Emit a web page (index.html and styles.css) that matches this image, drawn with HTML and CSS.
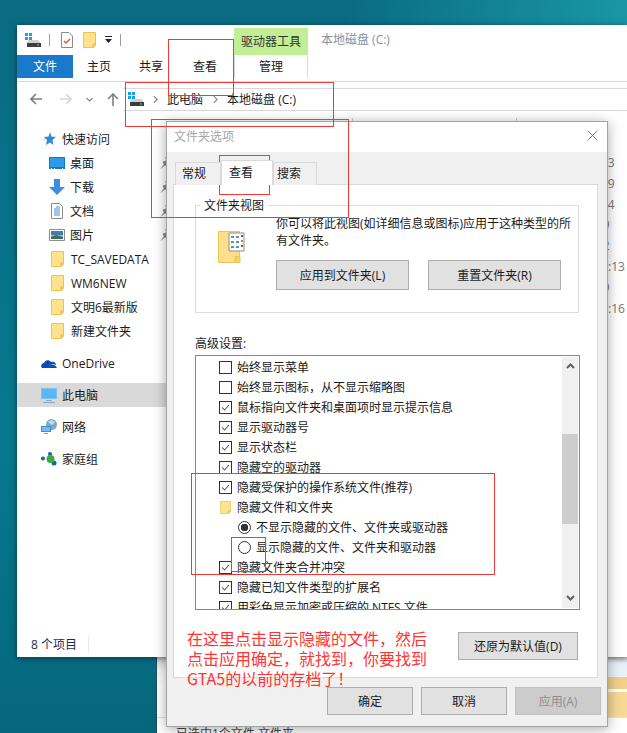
FILE: index.html
```html
<!DOCTYPE html>
<html lang="zh-CN">
<head>
  <meta charset="UTF-8" />
  <title>文件夹选项</title>
  <link rel="stylesheet" href="styles.css">
</head>
<body>
  <svg class="defs" width="0" height="0">
    <symbol id="folder" viewBox="0 0 13 16">
      <path d="M.5.5h12v11.5h-2.5v3.500H.5z" fill="#ffe28c" stroke="#eac54f"/>
      <path d="M10 15.500v-3.500h2.500v1.500l-2 2z" fill="#f5d06a" stroke="#eac54f"/>
    </symbol>
    <symbol id="drive" viewBox="0 0 16 14">
      <path d="M0 0h3v3H0zM4 0h3v3H4zM0 4h3v3H0zM4 4h3v3H4z" fill="#18a0e8"/>
      <path d="M2 9l2-2h9l2 2v4H2z" fill="#d0d0d0"/>
      <path d="M2 10h14v4H2z" fill="#3c3c3c"/>
      <path d="M12 11.500h2v1h-2z" fill="#5de05d"/>
    </symbol>
    <symbol id="tick" viewBox="0 0 13 13">
      <path d="M2.500 6.500l3 3 5-6" fill="none" stroke="#666" stroke-width="1.300"/>
    </symbol>
    <symbol id="pin" viewBox="0 0 10 10">
      <path d="M5 0l5 4-2 1-1 3-2-1-4 3 3-4-1-2 3-1z" fill="#8a8a8a"/>
    </symbol>
    <symbol id="crumb" viewBox="0 0 6 10">
      <path d="M1 1l4 4-4 4" fill="none" stroke="#8a8a8a" stroke-width="1.500"/>
    </symbol>
  </svg>

  <div class="back-window">
    <div class="back-top">
      <div class="back-gap"></div>
      <div class="back-folder">
        <div class="strip-blue"></div>
        <div class="strip-orange"></div>
        <div class="strip-white"></div>
        <div class="strip-light"></div>
      </div>
    </div>
    <div class="back-status">已选中1个文件 文件夹</div>
  </div>

  <div class="explorer">
    <div class="titlebar">
      <div class="qat">
        <svg class="qat-drive" width="16" height="14"><use href="#drive"/></svg>
        <span class="qat-sep"></span>
        <svg class="qat-doc" width="12" height="16" viewBox="0 0 12 16">
          <path d="M.5.5h7.500l3.500 3.500v11.500H.5z" fill="#fff" stroke="#8a8a8a"/>
          <path d="M3 9l2 2 4-4" fill="none" stroke="#e8572a" stroke-width="1.500"/>
        </svg>
        <svg class="qat-folder" width="13" height="16"><use href="#folder"/></svg>
        <svg class="qat-down" width="7" height="8" viewBox="0 0 7 8">
          <path d="M0 0h7v1H0zM0 3h7L3.500 7z" fill="#222"/>
        </svg>
        <span class="qat-sep"></span>
      </div>
      <div class="context-tab">驱动器工具</div>
      <div class="window-title">本地磁盘 (C:)</div>
    </div>

    <div class="ribbon">
      <div class="tab tab-file">文件</div>
      <div class="tab">主页</div>
      <div class="tab">共享</div>
      <div class="tab tab-view">查看</div>
      <div class="tab tab-manage">管理</div>
    </div>

    <div class="addressbar">
      <div class="nav-buttons">
        <svg width="12" height="12" viewBox="0 0 12 12"><path d="M6 1L1 6l5 5M1 6h11" fill="none" stroke="#7f7f7f" stroke-width="1.600"/></svg>
        <svg class="btn-forward" width="12" height="12" viewBox="0 0 12 12"><path d="M6 1l5 5-5 5M11 6H0" fill="none" stroke="#d8d8d8" stroke-width="1.600"/></svg>
        <svg class="btn-recent" width="7" height="5" viewBox="0 0 7 5"><path d="M.5 1l3 3 3-3" fill="none" stroke="#8a8a8a" stroke-width="1.200"/></svg>
        <svg class="btn-up" width="12" height="13" viewBox="0 0 12 13"><path d="M1 6l5-5 5 5M6 1v12" fill="none" stroke="#7f7f7f" stroke-width="1.600"/></svg>
      </div>
      <div class="address">
        <svg class="address-drive" width="16" height="14"><use href="#drive"/></svg>
        <svg class="crumb" width="5" height="9"><use href="#crumb"/></svg>
        <span class="crumb-text">此电脑</span>
        <svg class="crumb" width="5" height="9"><use href="#crumb"/></svg>
        <span class="crumb-text">本地磁盘 (C:)</span>
      </div>
    </div>

    <div class="main">
      <div class="nav-pane">
        <div class="nav-row">
          <svg class="nav-icon" width="16" height="16" viewBox="0 0 16 16">
            <path d="M0 10l5-2 1-2z" fill="#9fd0f2"/>
            <path d="M9 1l1.500 4.500L15 6l-3.500 3 1 5L9 11.500 5 14l1-5-3-3 4.500-.500z" fill="#2f8cd6"/>
          </svg>
          快速访问
        </div>
        <div class="nav-row sub">
          <svg class="nav-icon" width="16" height="16" viewBox="0 0 16 16">
            <path d="M0 2h16v12H0z" fill="#0b78d0"/>
            <path d="M1 3h14v9H1z" fill="#2d9be8"/>
            <path d="M2 13h1v1H2zM5 13h1v1H5zM13 13h1v1h-1z" fill="#fff"/>
          </svg>
          桌面
          <svg class="pin" width="12" height="12"><use href="#pin"/></svg>
        </div>
        <div class="nav-row sub">
          <svg class="nav-icon" width="16" height="16" viewBox="0 0 16 16">
            <path d="M5 0h6v8h5l-8 8-8-8h5z" fill="#3c8fdf"/>
          </svg>
          下载
          <svg class="pin" width="12" height="12"><use href="#pin"/></svg>
        </div>
        <div class="nav-row sub">
          <svg class="nav-icon" width="16" height="16" viewBox="0 0 16 16">
            <path d="M2.500.5h8l3 3v12h-11z" fill="#fff" stroke="#8a8a8a"/>
            <path d="M7 4h4M5 6h6M5 8h6M5 10h6M5 12h6" stroke="#3f8fcf"/>
          </svg>
          文档
          <svg class="pin" width="12" height="12"><use href="#pin"/></svg>
        </div>
        <div class="nav-row sub">
          <svg class="nav-icon" width="16" height="16" viewBox="0 0 16 16">
            <path d="M.5 2.500h15v11H.5z" fill="#fff" stroke="#8f8f8f"/>
            <path d="M2 4h12v4H2z" fill="#3e7fb5"/>
            <path d="M2 8h12v4H2z" fill="#9fc0b0"/>
            <path d="M2 10l5-2 7 2v2H2z" fill="#47685c"/>
          </svg>
          图片
          <svg class="pin" width="12" height="12"><use href="#pin"/></svg>
        </div>
        <div class="nav-row sub"><svg class="nav-folder" width="13" height="16"><use href="#folder"/></svg>TC_SAVEDATA</div>
        <div class="nav-row sub"><svg class="nav-folder" width="13" height="16"><use href="#folder"/></svg>WM6NEW</div>
        <div class="nav-row sub"><svg class="nav-folder" width="13" height="16"><use href="#folder"/></svg>文明6最新版</div>
        <div class="nav-row sub"><svg class="nav-folder" width="13" height="16"><use href="#folder"/></svg>新建文件夹</div>

        <div class="nav-row group">
          <svg class="nav-icon" width="16" height="16" viewBox="0 0 16 16">
            <path d="M1 13c-2-2 0-5 2-5 1-3 5-4 7-1 3-1 5 1 5 3-2-1-4-1-6 0l-3 3z" fill="#0a4cb0"/>
            <path d="M5 13l4-3c3-1 6 0 7 3z" fill="#0a4cb0"/>
          </svg>
          OneDrive
        </div>
        <div class="nav-row group selected">
          <svg class="nav-icon" width="16" height="16" viewBox="0 0 16 16">
            <path d="M0 1h16v11H0z" fill="#7cc4f0"/>
            <path d="M1 2h14v9H1z" fill="#5db6f2"/>
            <path d="M5 13h6v1H5zM2 15h12v1H2z" fill="#8aa6c0"/>
          </svg>
          此电脑
        </div>
        <div class="nav-row group">
          <svg class="nav-icon" width="16" height="16" viewBox="0 0 16 16">
            <circle cx="10.500" cy="5.500" r="5.500" fill="#7fa8cc"/>
            <path d="M7 3c2-2 5-2 7 0l-3 3z" fill="#c8dcec"/>
            <path d="M0 7h10v6H0z" fill="#3f8fd0"/>
            <path d="M1 8h8v4H1z" fill="#6ec0f0"/>
            <path d="M3 14h4v1H3z" fill="#7f9ab0"/>
          </svg>
          网络
        </div>
        <div class="nav-row group">
          <svg class="nav-icon" width="16" height="16" viewBox="0 0 16 16">
            <circle cx="2" cy="7.500" r="2" fill="#1c5fb0"/>
            <circle cx="9" cy="3" r="2" fill="#1c5fb0"/>
            <circle cx="13" cy="12" r="2.500" fill="#1c5fb0"/>
            <circle cx="9.500" cy="8" r="4" fill="#3dae3d"/>
          </svg>
          家庭组
        </div>
      </div>

      <div class="file-pane">
        <div class="col-header">
          <span class="col-mark"></span>
          <span class="col-mark"></span>
        </div>
        <div class="file-dates">
          <span class="date-row">13</span>
          <span class="date-row">29</span>
          <span class="date-row">04</span>
          <span class="date-row short">19</span>
          <span class="date-row short">12</span>
          <span class="date-row far">:13</span>
          <span class="date-row short">19</span>
          <span class="date-row far">:16</span>
        </div>
      </div>
    </div>

    <div class="statusbar"><span class="status-count">8 个项目</span></div>
  </div>

  <div class="dialog">
    <div class="dialog-title">
      文件夹选项
      <svg width="11" height="11" viewBox="0 0 11 11"><path d="M.5.5l10 10M10.500.5l-10 10" stroke="#7f7f7f"/></svg>
    </div>
    <div class="dialog-body">
      <div class="dlg-tabs">
        <div class="dlg-tab">常规</div>
        <div class="dlg-tab active">查看</div>
        <div class="dlg-tab">搜索</div>
      </div>
      <div class="page">
        <div class="groupbox">
          <div class="legend">文件夹视图</div>
          <div class="group-content">
            <svg class="big-folder" width="27" height="34" viewBox="0 0 27 34">
              <path d="M.5 1.500h21v31H.5z" fill="#ffe08a" stroke="#eac54f"/>
              <path d="M17 32.500v-6h5v6z" fill="#f5d06a" stroke="#eac54f"/>
              <path d="M11 3h15v18H11z" fill="#fff" stroke="#8f8f8f"/>
              <path d="M13 6h3v2h-3zM18 6h3v2h-3zM13 11h3v2h-3zM18 11h3v2h-3zM13 16h3v2h-3zM18 16h3v2h-3z" fill="#5f8fc0"/>
              <path d="M23 5h2v2h-2zM23 15h2v2h-2z" fill="#c0392b"/>
              <path d="M23 10h2v2h-2z" fill="#7fa83a"/>
            </svg>
            <div class="group-right">
              <p class="group-text">你可以将此视图(如详细信息或图标)应用于这种类型的所<br>有文件夹。</p>
              <div class="group-buttons">
                <button class="btn wide">应用到文件夹(L)</button>
                <button class="btn wide">重置文件夹(R)</button>
              </div>
            </div>
          </div>
        </div>

        <div class="adv-label">高级设置:</div>
        <div class="listbox">
          <div class="list-rows">
            <div class="list-row"><span class="check"></span>始终显示菜单</div>
            <div class="list-row"><span class="check"></span>始终显示图标，从不显示缩略图</div>
            <div class="list-row"><span class="check"><svg width="11" height="11"><use href="#tick"/></svg></span>鼠标指向文件夹和桌面项时显示提示信息</div>
            <div class="list-row"><span class="check"><svg width="11" height="11"><use href="#tick"/></svg></span>显示驱动器号</div>
            <div class="list-row"><span class="check"><svg width="11" height="11"><use href="#tick"/></svg></span>显示状态栏</div>
            <div class="list-row"><span class="check"><svg width="11" height="11"><use href="#tick"/></svg></span>隐藏空的驱动器</div>
            <div class="list-row"><span class="check"><svg width="11" height="11"><use href="#tick"/></svg></span>隐藏受保护的操作系统文件(推荐)</div>
            <div class="list-row"><svg class="list-folder" width="11" height="13"><use href="#folder"/></svg>隐藏文件和文件夹</div>
            <div class="list-row indent"><span class="radio on"></span>不显示隐藏的文件、文件夹或驱动器</div>
            <div class="list-row indent"><span class="radio"></span>显示隐藏的文件、文件夹和驱动器</div>
            <div class="list-row"><span class="check"><svg width="11" height="11"><use href="#tick"/></svg></span>隐藏文件夹合并冲突</div>
            <div class="list-row"><span class="check"><svg width="11" height="11"><use href="#tick"/></svg></span>隐藏已知文件类型的扩展名</div>
            <div class="list-row"><span class="check"><svg width="11" height="11"><use href="#tick"/></svg></span>用彩色显示加密或压缩的 NTFS 文件</div>
          </div>
          <div class="scrollbar">
            <svg width="9" height="6" viewBox="0 0 9 6"><path d="M1 5l3.500-3.500L8 5" fill="none" stroke="#606060" stroke-width="2"/></svg>
            <div class="scroll-thumb"></div>
            <svg width="9" height="6" viewBox="0 0 9 6"><path d="M1 1l3.500 3.500L8 1" fill="none" stroke="#606060" stroke-width="2"/></svg>
          </div>
        </div>
        <div class="restore-row">
          <button class="btn restore">还原为默认值(D)</button>
        </div>
      </div>
      <div class="dialog-footer">
        <button class="btn foot">确定</button>
        <button class="btn foot">取消</button>
        <button class="btn foot disabled">应用(A)</button>
      </div>
    </div>
  </div>

  <!-- annotations drawn on top of the screenshot -->
  <div class="mark mark-view"></div>
  <div class="mark mark-address"></div>
  <div class="mark mark-title"></div>
  <div class="mark mark-tab"></div>
  <div class="mark mark-hidden"></div>
  <div class="mark mark-radio"></div>
  <div class="note">在这里点击显示隐藏的文件，然后<br>点击应用确定，就找到，你要找到<br>GTA5的以前的存档了！</div>
</body>
</html>
```

FILE: styles.css
```css
* {
  box-sizing: border-box;
}

html, body {
  height: 100%;
}

body {
  margin: 0;
  position: relative;
  width: 627px;
  height: 733px;
  overflow: hidden;
  font-family: "Open Sans", "Noto Sans CJK SC", sans-serif;
  font-size: 12px;
  color: #1a1a1a;
  background:
    linear-gradient(90deg, rgba(0, 150, 170, 0) 55%, rgba(30, 165, 175, 0.75) 100%) top / 100% 25px no-repeat,
    linear-gradient(180deg, #0a6b82 0, #07748c 40%, #07798f 60%, #06677c 100%);
}

.defs {
  position: absolute;
}

/* window behind the explorer */
.back-window {
  position: absolute;
  left: 156px;
  top: 657px;
  right: 0;
  bottom: 0;
  display: flex;
  flex-direction: column;
  background: #fff;
  border-left: 1px solid #1d4c5c;
}

.back-top {
  display: flex;
  height: 60px;
}

.back-gap {
  flex: 1;
  background: linear-gradient(180deg, #cfcfcf, #f6f6f6 14px, #fff 30px);
}

.back-folder {
  width: 19px;
  display: flex;
  flex-direction: column;
}

.strip-blue {
  height: 20px;
  background: linear-gradient(180deg, #c4c8ca, #e6f0f6 6px, #eaf3f8);
}

.strip-orange {
  height: 12px;
  background: #f0d08a;
}

.strip-white {
  height: 3px;
  background: #fff;
}

.strip-light {
  height: 25px;
  background: #f5d995;
}

.back-status {
  border-top: 1px solid #e4e4e4;
  padding: 8px 0 0 19px;
  line-height: 16px;
  color: #444;
}

/* explorer window */
.explorer {
  position: absolute;
  left: 17px;
  top: 25px;
  width: 610px;
  height: 632px;
  display: flex;
  flex-direction: column;
  background: #fff;
  box-shadow: 0 1px 6px rgba(0, 0, 0, 0.5);
}

.titlebar {
  display: flex;
  height: 30px;
}

.qat {
  width: 217px;
  display: flex;
  align-items: center;
  padding-left: 8px;
}

.qat-sep {
  width: 1px;
  height: 12px;
  background: #a0a0a0;
}

.qat-drive {
  margin-right: 8px;
}

.qat-doc {
  margin: 0 10px 0 11px;
}

.qat-down {
  margin: 0 8px 0 9px;
}

.context-tab {
  width: 74px;
  height: 27px;
  margin-top: 3px;
  line-height: 27px;
  text-align: center;
  color: #333;
  background: #c2ee96;
}

.window-title {
  margin-left: 13px;
  line-height: 30px;
  color: #8a929c;
}

.ribbon {
  display: flex;
  height: 27px;
  border-bottom: 1px solid #d9d9d9;
}

.tab {
  height: 23px;
  line-height: 24px;
  padding: 0 14px;
}

.tab-file {
  width: 56px;
  padding: 0;
  text-align: center;
  color: #fff;
  background: #1979ca;
}

.tab-view {
  padding: 0 16px;
}

.tab-manage {
  width: 74px;
  margin-left: 1px;
  text-align: center;
  border-left: 1px solid #dadada;
  border-right: 1px solid #dadada;
}

.addressbar {
  display: flex;
  height: 36px;
  padding-top: 6px;
}

.nav-buttons {
  width: 106px;
  height: 22px;
  display: flex;
  align-items: center;
  padding-left: 13px;
}

.btn-forward {
  margin-left: 18px;
}

.btn-recent {
  margin-left: 14px;
}

.btn-up {
  margin-left: 14px;
}

.address {
  flex: 1;
  height: 23px;
  display: flex;
  align-items: center;
  padding: 0 0 1px 5px;
  border-top: 1px solid #d9d9d9;
  border-bottom: 1px solid #d9d9d9;
}

.address-drive {
  margin-right: 9px;
}

.crumb {
  margin-right: 9px;
}

.crumb-text {
  margin-right: 10px;
}

.main {
  flex: 1;
  display: flex;
  min-height: 0;
}

.nav-pane {
  width: 149px;
  padding-top: 9px;
}

.nav-row {
  height: 24px;
  display: flex;
  align-items: center;
  padding-left: 24px;
  white-space: nowrap;
}

.nav-row.sub {
  padding-left: 32px;
}

.nav-row.group {
  margin-top: 8px;
}

.nav-row.selected {
  background: #d9d9d9;
}

.nav-icon {
  margin-right: 5px;
  flex: none;
}

.nav-folder {
  margin: 0 7px 0 2px;
  flex: none;
}

.pin {
  margin-left: auto;
  margin-right: -5px;
}

.file-pane {
  flex: 1;
  min-width: 0;
}

.col-header {
  display: flex;
  height: 4px;
  padding-left: 186px;
  gap: 163px;
}

.col-mark {
  width: 1px;
  background: #d0d0d0;
}

.file-dates {
  display: flex;
  flex-direction: column;
  padding: 31px 0 0 435px;
  color: #777;
}

.date-row {
  height: 20.800px;
  line-height: 20.800px;
}

.date-row.short {
  margin-left: -5px;
}

.date-row.far {
  margin-left: 7px;
}

.statusbar {
  height: 24px;
  padding-left: 14px;
  line-height: 24px;
  color: #1e2b4a;
}

.status-count {
  padding-right: 11px;
  border-right: 1px solid #e8e8e8;
}

/* folder options dialog */
.dialog {
  position: absolute;
  left: 166px;
  top: 121px;
  width: 442px;
  height: 606px;
  display: flex;
  flex-direction: column;
  background: #f0f0f0;
  border: 1px solid #a3a3a3;
  box-shadow: 0 2px 12px rgba(0, 0, 0, 0.35);
}

.dialog-title {
  height: 30px;
  display: flex;
  align-items: center;
  justify-content: space-between;
  padding: 0 9px 3px 7px;
  color: #a6a6a6;
  background: #fff;
}

.dialog-body {
  flex: 1;
  display: flex;
  flex-direction: column;
  padding: 8px 9px 0 6px;
}

.dlg-tabs {
  display: flex;
  height: 25px;
  padding-left: 2px;
  position: relative;
  z-index: 1;
  margin-bottom: -1px;
}

.dlg-tab {
  height: 23px;
  margin-top: 2px;
  line-height: 21px;
  padding: 0 6px;
  width: 46px;
  background: #f0f0f0;
  border: 1px solid #d9d9d9;
  border-bottom: 0;
}

.dlg-tab.active {
  width: 52px;
  height: 25px;
  margin-top: 0;
  padding: 0 7px;
  line-height: 23px;
  background: #fff;
}

.dlg-tab.active + .dlg-tab {
  width: 44px;
  padding: 0 3px;
}

.page {
  height: 494px;
  padding: 20px 18px 0 21px;
  background: #fff;
  border: 1px solid #d9d9d9;
}

.groupbox {
  height: 108px;
  border: 1px solid #dcdcdc;
}

.legend {
  width: fit-content;
  margin: -9px 0 0 4px;
  padding: 0 4px;
  height: 17px;
  line-height: 17px;
  background: #fff;
}

.group-content {
  display: flex;
  padding: 0 0 0 22px;
}

.big-folder {
  margin: 16px 31px 0 0;
  flex: none;
}

.group-text {
  margin: 1px 0 11px;
  line-height: 17px;
  white-space: nowrap;
}

.group-buttons {
  display: flex;
  gap: 19px;
}

.btn {
  font: inherit;
  color: #1a1a1a;
  padding: 0;
  background: #e1e1e1;
  border: 1px solid #adadad;
}

.btn.wide {
  width: 133px;
  height: 30px;
}

.adv-label {
  margin-top: 22px;
  line-height: 17px;
}

.listbox {
  width: 385px;
  height: 255px;
  margin-top: 3px;
  display: flex;
  border: 1px solid #828790;
}

.list-rows {
  flex: 1;
  overflow: hidden;
  padding: 1px 0 0 23px;
}

.list-row {
  height: 20px;
  display: flex;
  align-items: center;
  white-space: nowrap;
}

.list-row.indent {
  padding-left: 19px;
}

.check {
  width: 13px;
  height: 13px;
  margin-right: 5px;
  display: flex;
  align-items: center;
  justify-content: center;
  border: 1px solid #333;
  flex: none;
}

.list-folder {
  margin: 0 6px 0 1px;
  flex: none;
}

.radio {
  width: 13px;
  height: 13px;
  margin-right: 5px;
  border: 1px solid #333;
  border-radius: 50%;
  flex: none;
}

.radio.on {
  background: radial-gradient(circle, #333 0, #333 3.500px, #fff 4px);
}

.scrollbar {
  width: 16px;
  margin: 1px 1px 1px 0;
  display: flex;
  flex-direction: column;
  align-items: center;
  padding-top: 6px;
  background: #f0f0f0;
}

.scroll-thumb {
  width: 100%;
  height: 90px;
  margin: 65px 0 71px;
  background: #cdcdcd;
}

.restore-row {
  display: flex;
  justify-content: flex-end;
  width: 383px;
  margin-top: 22px;
}

.btn.restore {
  width: 120px;
  height: 28px;
}

.dialog-footer {
  display: flex;
  justify-content: flex-end;
  gap: 8px;
  margin: 9px -3px 0 0;
}

.btn.foot {
  width: 86px;
  height: 28px;
}

.btn.disabled {
  color: #8c8c8c;
  background: #cccccc;
  border-color: #bfbfbf;
}

/* red annotations */
.mark {
  position: absolute;
  border: 1px solid #f03a3a;
}

.mark-view {
  left: 168px;
  top: 39px;
  width: 66px;
  height: 57px;
}

.mark-address {
  left: 125px;
  top: 82px;
  width: 209px;
  height: 45px;
}

.mark-title {
  left: 151px;
  top: 119px;
  width: 198px;
  height: 99px;
}

.mark-tab {
  left: 219px;
  top: 155px;
  width: 51px;
  height: 40px;
}

.mark-hidden {
  left: 191px;
  top: 473px;
  width: 304px;
  height: 102px;
}

.mark-radio {
  left: 231px;
  top: 537px;
  width: 35px;
  height: 35px;
}

.note {
  position: absolute;
  left: 187px;
  top: 628px;
  font-family: "Noto Sans CJK SC", sans-serif;
  font-size: 16px;
  line-height: 20px;
  color: #ff3333;
  white-space: nowrap;
}
```
